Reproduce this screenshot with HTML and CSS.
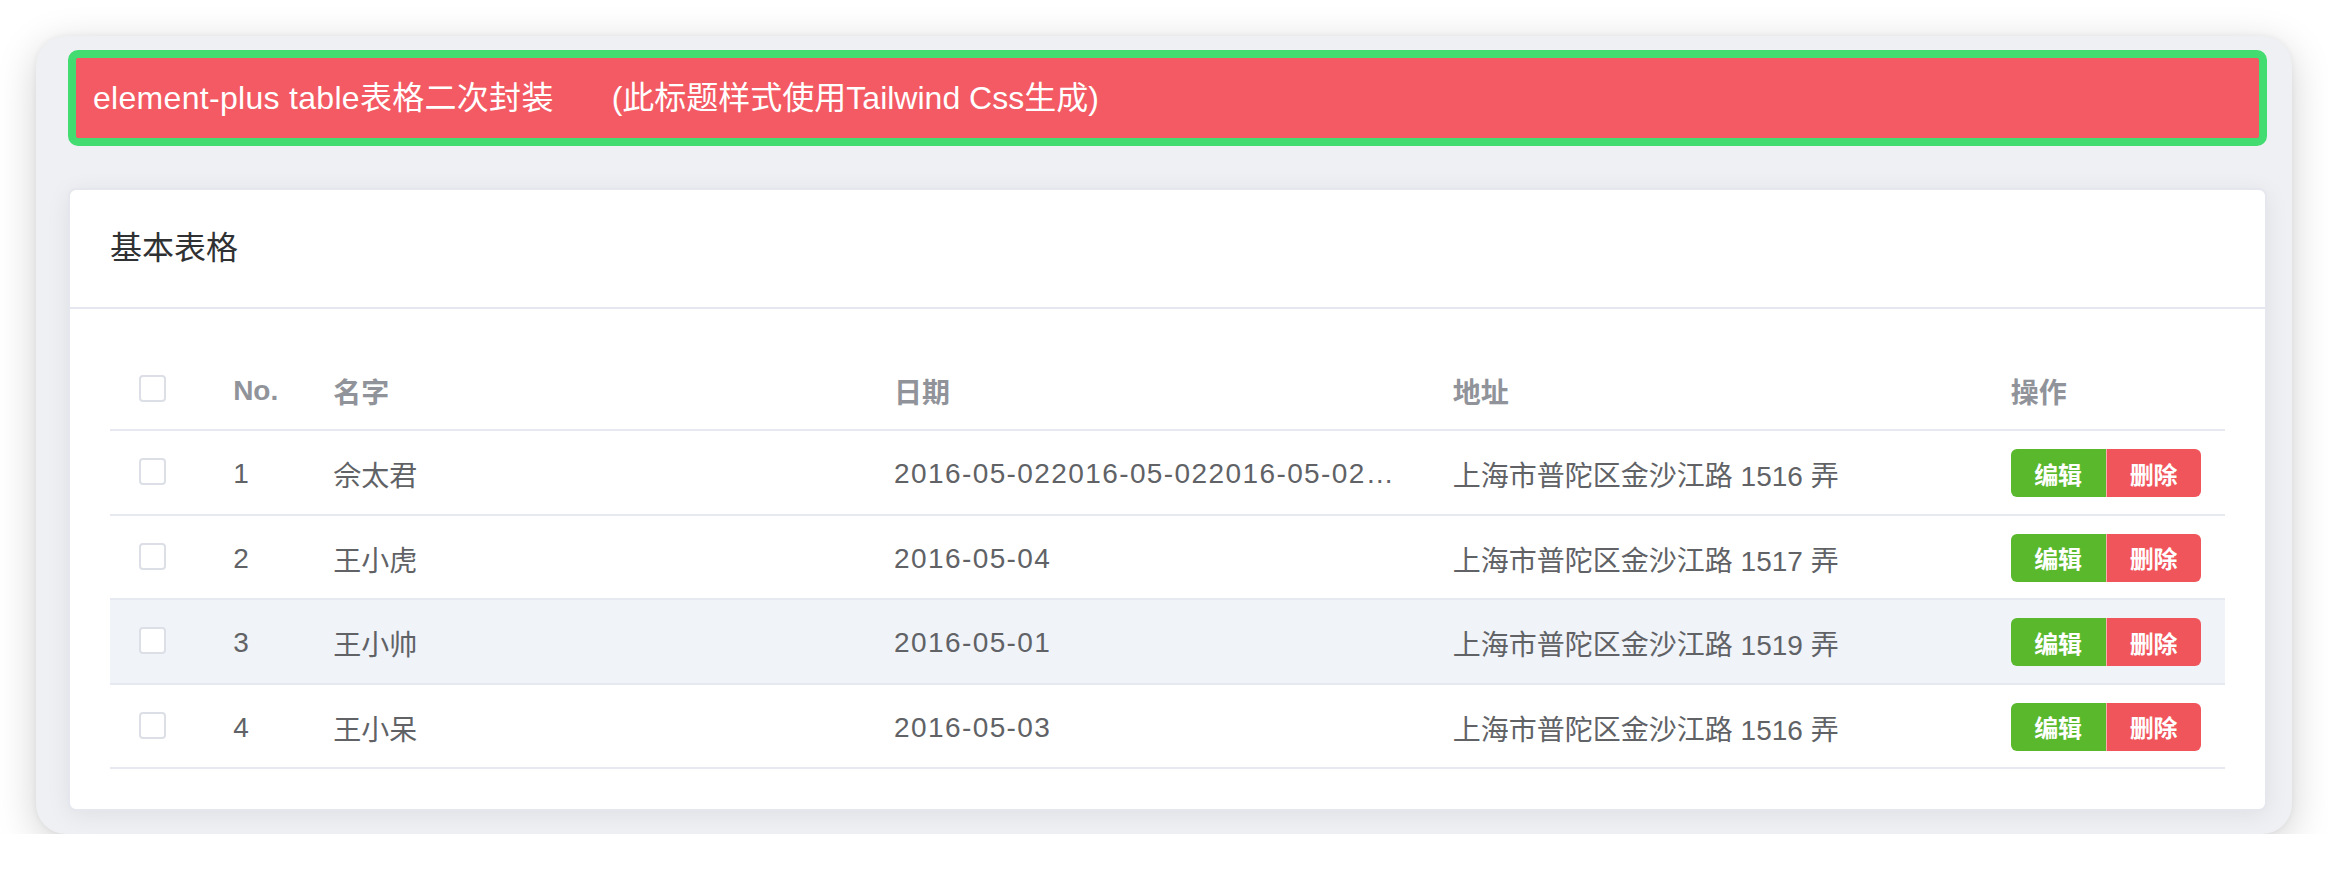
FILE: index.html
```html
<!DOCTYPE html>
<html lang="zh-CN">

<head>
    <meta charset="UTF-8">
    <title>element-plus table表格二次封装</title>
    <link rel="stylesheet" href="styles.css">
</head>

<body>
    <div class="window">
        <h1 class="banner">element-plus table表格二次封装<span class="banner-note">(此标题样式使用Tailwind Css生成)</span></h1>

        <div class="card">
            <div class="card-header">基本表格</div>
            <div class="card-body">
                <table class="table">
                    <colgroup>
                        <col class="col-sel">
                        <col class="col-no">
                        <col class="col-name">
                        <col class="col-date">
                        <col class="col-addr">
                        <col class="col-op">
                    </colgroup>
                    <thead>
                        <tr>
                            <th class="cell-sel"><span class="checkbox"></span></th>
                            <th>No.</th>
                            <th>名字</th>
                            <th>日期</th>
                            <th>地址</th>
                            <th>操作</th>
                        </tr>
                    </thead>
                    <tbody>
                        <tr>
                            <td class="cell-sel"><span class="checkbox"></span></td>
                            <td>1</td>
                            <td>佘太君</td>
                            <td class="date">2016-05-022016-05-022016-05-022016-05-02</td>
                            <td>上海市普陀区金沙江路 1516 弄</td>
                            <td class="cell-op">
                                <div class="btn-group">
                                    <button class="btn btn-edit">编辑</button><button class="btn btn-del">删除</button>
                                </div>
                            </td>
                        </tr>
                        <tr>
                            <td class="cell-sel"><span class="checkbox"></span></td>
                            <td>2</td>
                            <td>王小虎</td>
                            <td class="date">2016-05-04</td>
                            <td>上海市普陀区金沙江路 1517 弄</td>
                            <td class="cell-op">
                                <div class="btn-group">
                                    <button class="btn btn-edit">编辑</button><button class="btn btn-del">删除</button>
                                </div>
                            </td>
                        </tr>
                        <tr class="hover">
                            <td class="cell-sel"><span class="checkbox"></span></td>
                            <td>3</td>
                            <td>王小帅</td>
                            <td class="date">2016-05-01</td>
                            <td>上海市普陀区金沙江路 1519 弄</td>
                            <td class="cell-op">
                                <div class="btn-group">
                                    <button class="btn btn-edit">编辑</button><button class="btn btn-del">删除</button>
                                </div>
                            </td>
                        </tr>
                        <tr>
                            <td class="cell-sel"><span class="checkbox"></span></td>
                            <td>4</td>
                            <td>王小呆</td>
                            <td class="date">2016-05-03</td>
                            <td>上海市普陀区金沙江路 1516 弄</td>
                            <td class="cell-op">
                                <div class="btn-group">
                                    <button class="btn btn-edit">编辑</button><button class="btn btn-del">删除</button>
                                </div>
                            </td>
                        </tr>
                    </tbody>
                </table>
            </div>
        </div>
    </div>
</body>

</html>
```

FILE: styles.css
```css
body {
    margin: 0;
    padding: 0;
    background: #fff;
    font-family: 'Liberation Sans', 'Noto Sans CJK SC', Arial, sans-serif;
}

.window {
    box-sizing: border-box;
    width: 2256px;
    margin: 36px 0 0 36px;
    padding: 14px 25px 23px 32px;
    background: #eef0f3;
    border-radius: 30px;
    box-shadow: 0 10px 40px rgba(0, 0, 0, 0.18), 0 0 6px rgba(0, 0, 0, 0.06);
}

.banner {
    margin: 0;
    padding: 16px 17px;
    background: #f35a63;
    border: 8px solid #42dc70;
    border-radius: 10px;
    color: #fff;
    font-size: 32px;
    font-weight: normal;
    line-height: 48px;
    letter-spacing: 0.3px;
}

.banner-note {
    margin-left: 58px;
    letter-spacing: 0;
}

.card {
    margin-top: 42px;
    background: #fff;
    border: 2px solid #e4e7ed;
    border-radius: 8px;
    box-shadow: 0 4px 24px rgba(0, 0, 0, 0.07);
}

.card-header {
    padding: 36px 40px 37px 40px;
    border-bottom: 2px solid #e4e7ed;
    color: #303133;
    font-size: 32px;
    line-height: 44px;
}

.card-body {
    padding: 40px;
}

.table {
    width: 100%;
    table-layout: fixed;
    border-collapse: separate;
    border-spacing: 0;
    font-size: 28px;
    color: #606266;
}

.col-sel { width: 99px; }
.col-no { width: 100px; }
.col-name { width: 560px; }
.col-date { width: 558px; }
.col-addr { width: 557px; }
.col-op { width: 238px; }

.table th,
.table td {
    padding: 4px 24px 0 24px;
    text-align: left;
    border-bottom: 2px solid #e6e9f0;
    white-space: nowrap;
}

.table th {
    height: 76px;
    color: #909399;
    font-weight: bold;
}

.table td {
    height: 78.5px;
}

.table .cell-sel {
    padding-left: 29px;
    padding-right: 0;
}

.table .cell-op {
    padding-top: 2px;
    height: 80.5px;
}

.table tr.hover td {
    background: #f0f3f8;
}

.date {
    overflow: hidden;
    text-overflow: ellipsis;
    letter-spacing: 1.4px;
}

.checkbox {
    display: inline-block;
    box-sizing: border-box;
    width: 27px;
    height: 27px;
    border: 2px solid #dcdfe6;
    border-radius: 4px;
    background: #fff;
    vertical-align: middle;
    position: relative;
    top: -4px;
}

.btn-group {
    display: flex;
}

.btn {
    width: 95px;
    height: 48px;
    padding: 0;
    border: none;
    color: #fff;
    font-family: 'Liberation Sans', 'Noto Sans CJK SC', Arial, sans-serif;
    font-size: 24px;
    font-weight: bold;
    cursor: pointer;
}

.btn-edit {
    background: #5ab82c;
    border-radius: 6px 0 0 6px;
}

.btn-del {
    background: #f0555c;
    border-left: 1px solid rgba(255, 255, 255, 0.5);
    border-radius: 0 6px 6px 0;
}
```
